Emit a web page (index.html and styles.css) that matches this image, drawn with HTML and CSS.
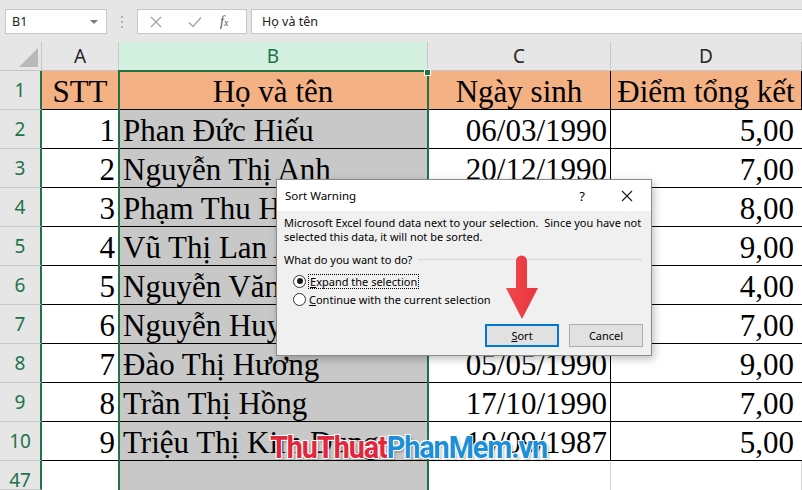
FILE: index.html
```html
<!DOCTYPE html>
<html lang="vi">
<head>
<meta charset="utf-8">
<title>Sort Warning</title>
<link rel="stylesheet" href="styles.css">
</head>
<body>
<div class="app">
  <div class="toolbar">
    <div class="namebox"><span>B1</span><span class="dd"></span></div>
    <div class="grip"><i></i><i></i><i></i></div>
    <div class="fxbox">
      <svg class="ic" width="14" height="14" viewBox="0 0 14 14"><path d="M2 2 L12 12 M12 2 L2 12" stroke="#a6a6a6" stroke-width="1.3" fill="none"/></svg>
      <svg class="ic" width="16" height="14" viewBox="0 0 16 14"><path d="M2 7.5 L6 11.5 L14 2.5" stroke="#a6a6a6" stroke-width="1.4" fill="none"/></svg>
      <span class="fx">f<sub>x</sub></span>
    </div>
    <div class="formula">Họ và tên</div>
  </div>

  <div class="sheet">
    <div class="corner"></div>
    <div class="ch">A</div>
    <div class="ch ch-sel">B</div>
    <div class="ch">C</div>
    <div class="ch">D</div>

    <div class="rh">1</div>
    <div class="c hd ctr">STT</div>
    <div class="c hd ctr">Họ và tên</div>
    <div class="c hd ctr">Ngày sinh</div>
    <div class="c hd ctr">Điểm tổng kết</div>

    <div class="rh">2</div>
    <div class="c num">1</div>
    <div class="c sel">Phan Đức Hiếu</div>
    <div class="c num">06/03/1990</div>
    <div class="c num last">5,00</div>

    <div class="rh">3</div>
    <div class="c num">2</div>
    <div class="c sel">Nguyễn Thị Anh</div>
    <div class="c num">20/12/1990</div>
    <div class="c num last">7,00</div>

    <div class="rh">4</div>
    <div class="c num">3</div>
    <div class="c sel">Phạm Thu Hà</div>
    <div class="c num">15/08/1990</div>
    <div class="c num last">8,00</div>

    <div class="rh">5</div>
    <div class="c num">4</div>
    <div class="c sel">Vũ Thị Lan Anh</div>
    <div class="c num">22/04/1990</div>
    <div class="c num last">9,00</div>

    <div class="rh">6</div>
    <div class="c num">5</div>
    <div class="c sel">Nguyễn Văn Nam</div>
    <div class="c num">11/11/1990</div>
    <div class="c num last">4,00</div>

    <div class="rh">7</div>
    <div class="c num">6</div>
    <div class="c sel">Nguyễn Huy Hoàng</div>
    <div class="c num">03/02/1990</div>
    <div class="c num last">7,00</div>

    <div class="rh">8</div>
    <div class="c num">7</div>
    <div class="c sel">Đào Thị Hương</div>
    <div class="c num">05/05/1990</div>
    <div class="c num last">9,00</div>

    <div class="rh">9</div>
    <div class="c num">8</div>
    <div class="c sel">Trần Thị Hồng</div>
    <div class="c num">17/10/1990</div>
    <div class="c num last">7,00</div>

    <div class="rh">10</div>
    <div class="c num">9</div>
    <div class="c sel">Triệu Thị Kim Dung</div>
    <div class="c num">10/09/1987</div>
    <div class="c num last">5,00</div>

    <div class="rh">47</div>
    <div class="e"></div>
    <div class="e e-sel"></div>
    <div class="e"></div>
    <div class="e"></div>

    <div class="selection"></div>
  </div>

  <div class="dialog">
    <div class="titlebar">
      <span class="title">Sort Warning</span>
      <span class="help">?</span>
      <svg class="close" width="12" height="12" viewBox="0 0 12 12"><path d="M1 1 L11 11 M11 1 L1 11" stroke="#1a1a1a" stroke-width="1.1" fill="none"/></svg>
    </div>
    <div class="body">
      <p class="msg">Microsoft Excel found data next to your selection.&nbsp; Since you have not<br>selected this data, it will not be sorted.</p>
      <div class="question"><span>What do you want to do?</span><span class="rule"></span></div>
      <div class="opt"><span class="radio on"></span><span class="focus"><u>E</u>xpand the selection</span></div>
      <div class="opt"><span class="radio"></span><span class="lbl"><u>C</u>ontinue with the current selection</span></div>
      <div class="buttons">
        <div class="btn btn-default"><u>S</u>ort</div>
        <div class="btn">Cancel</div>
      </div>
    </div>
  </div>

  <svg class="arrow" width="34" height="66" viewBox="0 0 34 66">
    <defs>
      <linearGradient id="ag" x1="0" y1="0" x2="1" y2="0">
        <stop offset="0" stop-color="#f0474e"/>
        <stop offset="1" stop-color="#e8353d"/>
      </linearGradient>
    </defs>
    <path d="M11 6 A5.5 5.5 0 0 1 22 6 L22 33 L33 33 L17 64 L1 33 L11 33 Z" fill="url(#ag)"/>
  </svg>

  <div class="watermark"><span class="wm-red">ThuThuat</span><span class="wm-blue">PhanMem.vn</span></div>
</div>
</body>
</html>
```

FILE: styles.css
```css
* { box-sizing: border-box; }
html, body { margin: 0; padding: 0; }
body { width: 802px; height: 490px; overflow: hidden; background: #fff; }

.app { position: relative; width: 802px; height: 490px; overflow: hidden; font-family: "Noto Sans", sans-serif; }

/* toolbar */
.toolbar { height: 42px; background: #e6e6e6; display: flex; align-items: flex-start; padding-top: 9px; }
.namebox { margin-left: 5px; width: 102px; height: 25px; background: #fff; border: 1px solid #c6c6c6; display: flex; align-items: center; justify-content: space-between; padding: 0 6px 0 6px; font-size: 12.5px; color: #222; }
.dd { width: 0; height: 0; border-left: 4px solid transparent; border-right: 4px solid transparent; border-top: 4px solid #7a7a7a; margin-right: 2px; }
.grip { width: 30px; height: 25px; display: flex; flex-direction: column; align-items: center; justify-content: center; gap: 3px; }
.grip i { display: block; width: 2px; height: 2px; background: #b3b3b3; }
.fxbox { width: 110px; height: 25px; background: #fff; border: 1px solid #c6c6c6; display: flex; align-items: center; padding-left: 11px; gap: 0; }
.fxbox .ic:first-child { margin-right: 24px; }
.fxbox .ic:nth-child(2) { margin-right: 17px; }
.fx { font-family: "Liberation Serif", serif; font-style: italic; font-size: 14px; color: #555; }
.fx sub { font-size: 10px; vertical-align: 0; }
.formula { margin-left: 4px; flex: 1; height: 25px; background: #fff; border: 1px solid #c6c6c6; border-right: 0; padding-left: 10px; font-size: 12.5px; line-height: 23px; color: #222; }

/* sheet */
.sheet { position: relative; display: grid; grid-template-columns: 42px 77px 309px 183px 1fr; grid-template-rows: 29px repeat(10, 39px) 29px; }
.corner { background: #e6e6e6; border-right: 1px solid #c6c6c6; border-bottom: 1px solid #c6c6c6; position: relative; }
.corner::after { content: ""; position: absolute; right: 3px; bottom: 3px; width: 0; height: 0; border-left: 19px solid transparent; border-bottom: 19px solid #b9b9b9; }
.ch { background: #e6e6e6; border-right: 1px solid #c9c9c9; border-bottom: 1px solid #c6c6c6; text-align: center; font-size: 19px; line-height: 28px; color: #262626; }
.ch-sel { background: #d3f0e0; color: #217346; }
.rh { background: #e6e6e6; border-right: 2px solid #217346; border-bottom: 1px solid #c9c9c9; text-align: center; font-size: 19px; line-height: 38px; color: #217346; }

.c { font-family: "Liberation Serif", serif; font-size: 31px; line-height: 37px; padding-top: 2px; color: #000; border-right: 1px solid #000; border-bottom: 1px solid #000; white-space: nowrap; overflow: hidden; background: #fff; }
.hd { background: #f4b183; }
.ctr { text-align: center; }
.num { text-align: right; padding-right: 3px; }
.num.last { padding-right: 8px; border-right: 0; }
.sel { background: #c8c8c8; padding-left: 4px; }
.e { border-right: 1px solid #d4d4d4; background: #fff; }
.e-sel { background: #c8c8c8; }

.selection { position: absolute; left: 118px; top: 28px; width: 311px; height: 460px; border: 2px solid #217346; pointer-events: none; }
.selection::after { content: ""; position: absolute; right: -4px; top: -3px; width: 5px; height: 5px; background: #217346; border: 1px solid #fff; }

/* dialog */
.dialog { position: absolute; left: 276px; top: 179px; width: 376px; height: 177px; background: #f0f0f0; border: 1px solid #8a8a8a; box-shadow: 2px 3px 8px rgba(0,0,0,0.25); font-family: "Noto Sans", sans-serif; color: #000; }
.titlebar { height: 31px; background: #fff; display: flex; align-items: center; padding-left: 8px; }
.title { font-size: 11.5px; flex: 1; }
.help { font-size: 13px; margin-right: 36px; }
.close { margin-right: 18px; }
.body { padding: 5px 8px 0 7px; font-size: 11px; }
.msg { margin: 0; line-height: 13.5px; letter-spacing: 0; }
.question { display: flex; align-items: center; margin-top: 9px; height: 14px; }
.rule { flex: 1; border-top: 1px solid #d7d7d7; margin-left: 6px; margin-right: 1px; }
.opt { display: flex; align-items: center; height: 18px; margin-left: 9px; }
.question + .opt { margin-top: 6px; }
.radio { width: 13px; height: 13px; border: 1px solid #333; border-radius: 50%; background: #fff; position: relative; margin-right: 2px; }
.radio.on::after { content: ""; position: absolute; left: 2.5px; top: 2.5px; width: 6px; height: 6px; border-radius: 50%; background: #1a1a1a; }
.focus { border: 1px dotted #000; padding: 0 1px; line-height: 13px; }
.lbl { padding-left: 1px; }
.buttons { display: flex; justify-content: flex-end; gap: 10px; margin-top: 16px; padding-right: 0; }
.btn { width: 74px; height: 23px; background: #e1e1e1; border: 1px solid #adadad; display: flex; align-items: center; justify-content: center; font-size: 11px; }
.btn-default { border: 2px solid #0078d7; }

.arrow { position: absolute; left: 505px; top: 255px; }

.watermark { position: absolute; left: 270px; top: 428px; font-family: Roboto, sans-serif; font-weight: 700; font-size: 32px; letter-spacing: -1.2px; transform: scaleX(0.9); transform-origin: left top; white-space: nowrap; text-shadow: 0 0 2px #fff, 1px 1px 0 #fff, -1px -1px 0 #fff, 1px -1px 0 #fff, -1px 1px 0 #fff, 2px 2px 3px rgba(0,0,0,0.35); }
.wm-red { color: #e2263e; }
.wm-blue { color: #1d8fd8; }
```
